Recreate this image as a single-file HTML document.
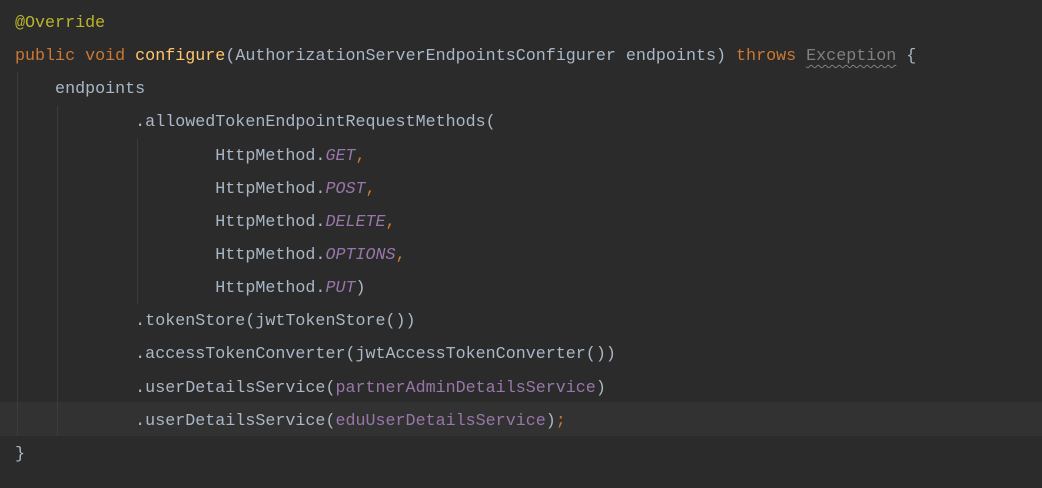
<!DOCTYPE html>
<html><head><meta charset="utf-8"><style>
html,body{margin:0;padding:0;background:#2b2b2b;width:1042px;height:488px;overflow:hidden}
.c{position:absolute;left:15px;top:7px;font-family:"Liberation Mono",monospace;font-size:16.7px;color:#a9b7c6}
.l{height:33.15px;line-height:33.15px;white-space:pre}
.an{color:#bbb529}.kw{color:#cc7832}.fn{color:#ffc66d}.pu{color:#9876aa}.st{color:#9876aa;font-style:italic}
.ex{color:#808080;text-decoration:underline wavy #808080;text-underline-offset:4px;text-decoration-thickness:1px}
.cur{position:absolute;left:0;top:402px;width:1042px;height:34px;background:#323232}
.g{position:absolute;width:1px;background:#3c3c3c}
</style></head><body>
<div class="cur"></div>
<div class="g" style="left:17px;top:72px;height:364px"></div>
<div class="g" style="left:57px;top:106px;height:330px"></div>
<div class="g" style="left:137px;top:139px;height:165px"></div>
<div class="c"><div class="l"><span class="an">@Override</span></div><div class="l"><span class="kw">public void </span><span class="fn">configure</span>(AuthorizationServerEndpointsConfigurer endpoints) <span class="kw">throws</span> <span class="ex">Exception</span> {</div><div class="l">    endpoints</div><div class="l">            .allowedTokenEndpointRequestMethods(</div><div class="l">                    HttpMethod.<span class="st">GET</span><span class="kw">,</span></div><div class="l">                    HttpMethod.<span class="st">POST</span><span class="kw">,</span></div><div class="l">                    HttpMethod.<span class="st">DELETE</span><span class="kw">,</span></div><div class="l">                    HttpMethod.<span class="st">OPTIONS</span><span class="kw">,</span></div><div class="l">                    HttpMethod.<span class="st">PUT</span>)</div><div class="l">            .tokenStore(jwtTokenStore())</div><div class="l">            .accessTokenConverter(jwtAccessTokenConverter())</div><div class="l">            .userDetailsService(<span class="pu">partnerAdminDetailsService</span>)</div><div class="l">            .userDetailsService(<span class="pu">eduUserDetailsService</span>)<span class="kw">;</span></div><div class="l">}</div></div>
</body></html>
